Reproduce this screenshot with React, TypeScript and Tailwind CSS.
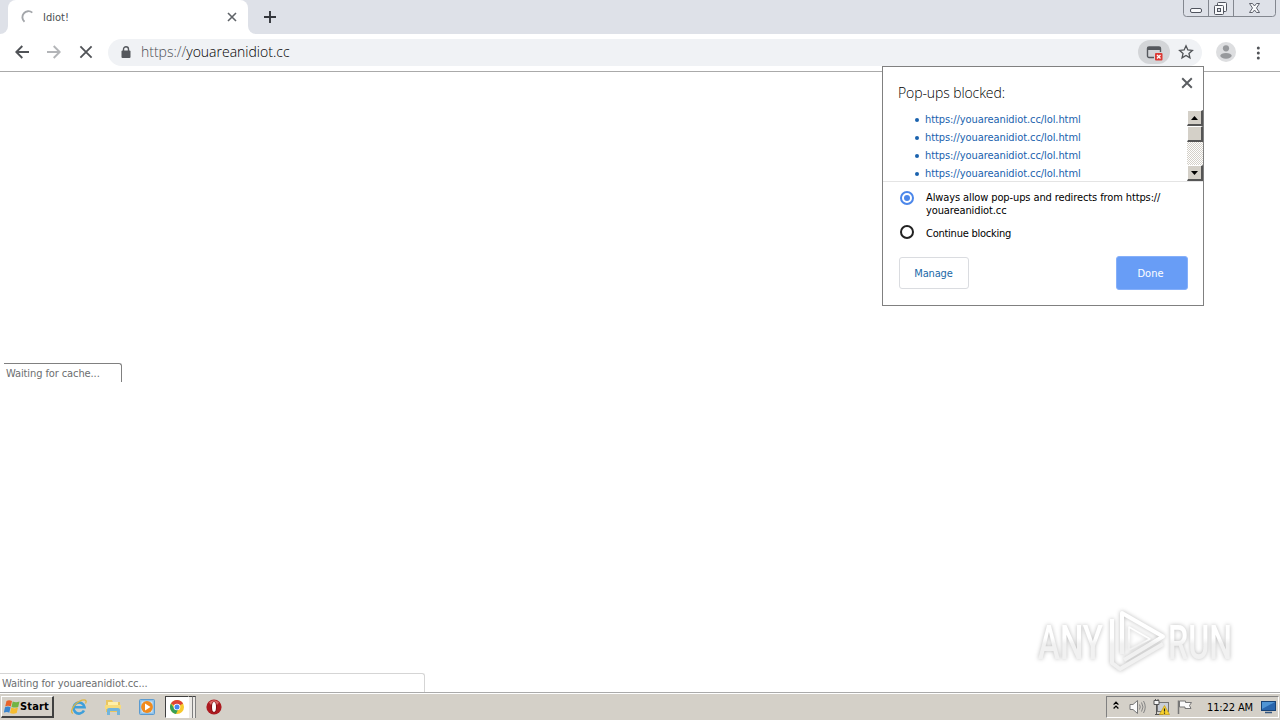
import React from 'react';

const blockedUrls = [
  'https://youareanidiot.cc/lol.html',
  'https://youareanidiot.cc/lol.html',
  'https://youareanidiot.cc/lol.html',
  'https://youareanidiot.cc/lol.html',
];

function Cross({ size, stroke, className }: { size: number; stroke: number; className: string }) {
  return (
    <svg width={size} height={size} viewBox="0 0 10 10" className={className}>
      <path d="M1 1L9 9M9 1L1 9" stroke="currentColor" strokeWidth={stroke} />
    </svg>
  );
}

function WindowButtons() {
  return (
    <svg width="94" height="18" viewBox="0 0 94 18" className="shrink-0">
      <path d="M.5 0V13.500a3 3 0 0 0 3 3H89.500a3 3 0 0 0 3-3V0M25.500 0V16.500M50.500 0V16.500" fill="none" stroke="#83878f" />
      <rect x="7.500" y="8.500" width="11" height="4" rx="1.500" fill="#f8f9fb" stroke="#50545e" />
      <rect x="34.500" y="2.500" width="9" height="9" rx="1" fill="#f8f9fb" stroke="#50545e" />
      <rect x="31.500" y="5.500" width="9" height="9" rx="1" fill="#f8f9fb" stroke="#50545e" />
      <rect x="34.500" y="8.500" width="3" height="3" fill="#dee1e8" stroke="#50545e" />
      <path d="M66.500 3.500h3l2 2.500 2-2.500h3L73.500 8l3 4.500h-3l-2-2.500-2 2.500h-3l3-4.500z" fill="#f8f9fb" stroke="#50545e" strokeWidth=".9" />
    </svg>
  );
}

function TabStrip() {
  return (
    <div className="flex h-[34px] shrink-0 bg-[#dee1e8]">
      <div className="flex w-2 items-end bg-white">
        <div className="h-full w-2 rounded-br-lg bg-[#dee1e8]" />
      </div>
      <div className="bg-[#dee1e8]">
        <div className="flex h-[34px] w-[240px] items-center rounded-t-lg bg-white pl-3 pr-[11px]">
          <svg width="16" height="16" viewBox="0 0 16 16">
            <path d="M4.500 12.800A5.800 5.800 0 0 1 12.300 3.600" fill="none" stroke="#a3a6aa" strokeWidth="1.900" />
          </svg>
          <span className="ml-[7px] mt-px text-[11px] leading-4 text-[#4b4e52]">Idiot!</span>
          <Cross size={10} stroke={1.6} className="ml-auto text-[#5f6368]" />
        </div>
      </div>
      <div className="w-2 bg-white">
        <div className="h-full w-2 rounded-bl-lg bg-[#dee1e8]" />
      </div>
      <svg width="12" height="12" viewBox="0 0 12 12" className="ml-2 mt-[11px]">
        <path d="M6 0V12M0 6H12" stroke="#33363c" strokeWidth="1.900" />
      </svg>
      <div className="ml-auto pr-[3px]">
        <WindowButtons />
      </div>
    </div>
  );
}

function Toolbar() {
  return (
    <div className="flex h-[38px] shrink-0 items-center border-b border-[#aaaaaa] bg-white pb-px pl-[15px]">
      <svg width="14" height="14" viewBox="0 0 14 14" className="text-[#505357]">
        <path d="M14 7H1.500M7.300 1L1.300 7L7.300 13" fill="none" stroke="currentColor" strokeWidth="1.900" />
      </svg>
      <svg width="14" height="14" viewBox="0 0 14 14" className="ml-[18px] text-[#b3b5b8]">
        <path d="M0 7H12.500M6.700 1L12.700 7L6.700 13" fill="none" stroke="currentColor" strokeWidth="1.900" />
      </svg>
      <Cross size={14} stroke={1.3} className="ml-[18px] text-[#505357]" />
      <div className="ml-[15px] flex h-[27px] w-[1094px] items-center rounded-full bg-[#f0f2f5] pl-[13px] pr-[8px]">
        <svg width="10" height="13" viewBox="0 0 10 13">
          <rect x=".5" y="4.500" width="9" height="7.500" rx="1" fill="#55585d" />
          <path d="M2.500 5V3.200a2.500 2.500 0 0 1 5 0V5" fill="none" stroke="#55585d" strokeWidth="1.400" />
        </svg>
        <span className="ml-[10px] whitespace-nowrap font-['Open_Sans','Noto_Sans',sans-serif] text-[14px] font-light leading-5 text-black">
          <span className="tracking-[-0.02px] text-[#4b4e53]">https://</span>youareanidiot.cc
        </span>
        <div className="ml-auto flex h-6 w-8 items-center justify-center rounded-full bg-[#d3d5d8]">
          <svg width="18" height="16" viewBox="0 0 18 16" className="ml-px mt-px">
            <path d="M8 12.500H3a1.500 1.500 0 0 1-1.500-1.500V3.500A1.500 1.500 0 0 1 3 2H13a1.500 1.500 0 0 1 1.500 1.500V7" fill="none" stroke="#55585d" strokeWidth="1.400" />
            <path d="M1.500 2h13v3h-13z" fill="#55585d" />
            <rect x="9" y="8" width="7.500" height="7.500" rx="1" fill="#dc3a35" />
            <path d="M11 10l3.500 3.500M14.500 10L11 13.500" stroke="#fff" strokeWidth="1.300" />
          </svg>
        </div>
        <svg width="16" height="16" viewBox="0 0 16 16" className="ml-2">
          <path d="M8 1.800l1.850 4.150 4.500.45-3.400 3 1 4.450L8 11.500l-3.950 2.350 1-4.450-3.400-3 4.500-.45z" fill="none" stroke="#505357" strokeWidth="1.300" />
        </svg>
      </div>
      <svg width="20" height="20" viewBox="0 0 20 20" className="ml-[14px]">
        <circle cx="10" cy="10" r="10" fill="#dddee0" />
        <circle cx="10" cy="6.300" r="3.100" fill="#97999c" />
        <ellipse cx="10" cy="13.800" rx="5.700" ry="2.900" fill="#97999c" />
      </svg>
      <svg width="4" height="14" viewBox="0 0 4 14" className="ml-5 mt-px text-[#505357]">
        <circle cx="2.300" cy="2" r="1.500" fill="currentColor" />
        <circle cx="2.300" cy="7" r="1.500" fill="currentColor" />
        <circle cx="2.300" cy="12" r="1.500" fill="currentColor" />
      </svg>
    </div>
  );
}

function ScrollButton({ up }: { up?: boolean }) {
  return (
    <div className="flex h-4 w-4 items-center justify-center border border-b-2 border-r-2 border-b-[#555] border-l-white border-r-[#555] border-t-white bg-[#d4d0c8]">
      <svg width="7" height="4" viewBox="0 0 7 4">
        <path d={up ? 'M0 4L3.500 0L7 4z' : 'M0 0H7L3.500 4z'} fill="#000" />
      </svg>
    </div>
  );
}

function PopupBubble() {
  return (
    <div className="absolute left-[882px] top-[66px] flex h-[240px] w-[322px] flex-col border border-[#808080] bg-white text-[11px] text-black">
      <div className="flex h-[43px] shrink-0 justify-between pl-[15px] pr-[10px]">
        <h2 className="mt-[16px] whitespace-nowrap font-['Open_Sans','Noto_Sans',sans-serif] text-[14px] font-light leading-5 tracking-[-0.1px]">Pop-ups blocked:</h2>
        <Cross size={12} stroke={1.6} className="mt-[10px] text-[#5a5d61]" />
      </div>
      <div className="flex h-[72px] shrink-0 justify-between border-b border-[#e4e4e4]">
        <ul className="pl-[32px] pt-px">
          {blockedUrls.map((url, i) => (
            <li key={i} className="flex h-[18px] items-center text-[#1a62ae]">
              <span className="h-1 w-1 rounded-full bg-[#1a62ae]" />
              <span className="ml-[6px] whitespace-nowrap leading-[18px] tracking-[-0.08px]">{url}</span>
            </li>
          ))}
        </ul>
        <div className="flex w-4 flex-col bg-[#e9e7e3]">
          <ScrollButton up />
          <div className="h-4 w-4 border border-b-2 border-r-2 border-b-[#555] border-l-white border-r-[#555] border-t-white bg-[#d4d0c8]" />
          <div className="flex-1 bg-[repeating-conic-gradient(#d4d0c8_0_25%,#ffffff_0_50%)] bg-[length:2px_2px]" />
          <ScrollButton />
        </div>
      </div>
      <div className="flex pl-[17px] pt-[9px]">
        <div className="flex h-[14px] w-[14px] items-center justify-center rounded-full border-2 border-[#4c87ea]">
          <div className="h-[6px] w-[6px] rounded-full bg-[#4c87ea]" />
        </div>
        <p className="ml-3 whitespace-nowrap leading-[13px] tracking-[-0.11px]">
          Always allow pop-ups and redirects from https://
          <br />
          youareanidiot.cc
        </p>
      </div>
      <div className="mt-[8px] flex pl-[17px]">
        <div className="h-[14px] w-[14px] rounded-full border-2 border-[#222]" />
        <p className="ml-3 mt-[2px] whitespace-nowrap leading-[13px] tracking-[-0.25px]">Continue blocking</p>
      </div>
      <div className="mt-[16px] flex justify-between pl-[16px] pr-[15px]">
        <button className="mt-px h-[32px] w-[70px] rounded-[3px] border border-[#dadce0] pr-px pt-[2px] tracking-[-0.15px] text-[#1a69a8]">Manage</button>
        <button className="h-[34px] w-[72px] rounded-[3px] border border-[#86b0fa] bg-[#689df6] pr-[3px] pt-[2px] text-white">Done</button>
      </div>
    </div>
  );
}

function Watermark() {
  return (
    <svg width="250" height="76" viewBox="0 0 250 76" className="absolute left-[1030px] top-[602px] drop-shadow-[0_0_2px_#bbbbbb]">
      <defs>
        <linearGradient id="fade" gradientUnits="userSpaceOnUse" x1="0" y1="36" x2="0" y2="42">
          <stop offset="0" stopColor="#ffffff" />
          <stop offset="1" stopColor="#f1f1f1" />
        </linearGradient>
      </defs>
      <g fill="url(#fade)" fontFamily="Roboto, sans-serif" fontSize="48" fontWeight="500">
        <text x="8" y="57" textLength="65" lengthAdjust="spacingAndGlyphs">ANY</text>
        <text x="138" y="57" textLength="64" lengthAdjust="spacingAndGlyphs">RUN</text>
      </g>
      <g fill="none" stroke="url(#fade)" strokeWidth="4" strokeLinejoin="round">
        <path d="M92 52V11L133 34.500L94 58" />
        <path d="M82 17V61L90 67L133 42" />
        <path d="M99 48V25L120 37z" strokeWidth="1.500" />
      </g>
    </svg>
  );
}

function StartButton() {
  return (
    <div className="flex h-[22px] w-[53px] items-center border border-b-2 border-r-2 border-b-[#404040] border-l-white border-r-[#404040] border-t-white pl-[2px]">
      <svg width="16" height="16" viewBox="0 0 16 16">
        <path d="M2.500 2Q5 .3 8 2L6.800 7.400Q4 5.900 1.200 7.400z" fill="#e8632a" />
        <path d="M8.700 2.400Q12 4 15.500 2.400L14.200 7.900Q11 9.100 7.500 7.900z" fill="#72b443" />
        <path d="M1 8.200Q4 6.700 6.600 8.200L5.300 13.700Q3 12.200-.2 13.700z" fill="#3985cf" />
        <path d="M7.300 8.600Q10.500 10.200 14 8.600L12.700 14Q9 15.500 6 14z" fill="#f5bc2f" />
      </svg>
      <span className="mt-px text-[11px] font-bold leading-4 tracking-[0.15px] text-black">Start</span>
    </div>
  );
}

function Taskbar() {
  return (
    <div className="flex h-[27px] shrink-0 items-center border-t border-white bg-[#d4d0c8] pl-px">
      <StartButton />
      {/* Internet Explorer */}
      <svg width="18" height="18" viewBox="0 0 18 18" className="ml-[16px]">
        <path d="M14 12.500A5.500 5.500 0 1 1 14.500 9.300H5" fill="none" stroke="#3e9fda" strokeWidth="2.600" />
        <path d="M3 15.500C-1 14 4 5 12 2.200C16 1 17 3 15.500 5.500" fill="none" stroke="#dfb640" strokeWidth="1.300" />
      </svg>
      {/* Explorer */}
      <svg width="18" height="18" viewBox="0 0 18 18" className="ml-[16px]">
        <path d="M2 2h6l1 2h7v10H2z" fill="#eac660" />
        <path d="M4 4h10v7H4z" fill="#fff0a8" />
        <path d="M1 7h16v4H1z" fill="#f7dc7c" />
        <path d="M3 17v-5q0-2 2-2h9q2 0 2 2v5h-3v-4H6v4z" fill="#72b5dc" />
      </svg>
      {/* Media player */}
      <svg width="16" height="16" viewBox="0 0 16 16" className="ml-[17px]">
        <rect x=".5" y=".5" width="15" height="15" rx="1" fill="#8fc1e8" stroke="#5b9bd0" />
        <rect x="2.500" y="2.500" width="11" height="11" fill="#d5e9f8" />
        <circle cx="8" cy="8" r="5.900" fill="#f08a1d" />
        <path d="M6 4.500L11.500 8L6 11.500z" fill="#fff" />
      </svg>
      <div className="ml-[10px] flex h-[22px] w-[24px] items-center justify-center border border-b-white border-l-[#404040] border-r-white border-t-[#404040] bg-white">
        <svg width="16" height="16" viewBox="0 0 16 16">
          <circle cx="8" cy="8" r="7" fill="#f7c92c" />
          <path d="M8 8L1.940 4.500A7 7 0 0 1 14.060 4.500z" fill="#dd4336" />
          <path d="M1.940 4.500A7 7 0 0 0 7 14.950L9.500 9.500L5 9z" fill="#37a055" />
          <circle cx="8" cy="8" r="3.300" fill="#fff" />
          <circle cx="8" cy="8" r="2.500" fill="#4586ee" />
        </svg>
      </div>
      <div className="h-[22px] w-[4px] border-r border-t border-r-[#808080] border-t-[#404040] bg-[#eceae6]" />
      <div className="h-[22px] w-[3px] border-r border-t border-r-[#808080] border-t-[#404040] bg-[#eceae6]" />
      {/* Opera */}
      <svg width="16" height="16" viewBox="0 0 16 16" className="ml-[10px]">
        <circle cx="8" cy="8" r="7.600" fill="#ac1a20" />
        <path d="M3 3.500Q8-1 13 3.500L11 6H5z" fill="#d96866" />
        <ellipse cx="8" cy="8" rx="3" ry="5.600" fill="#7c1014" />
        <ellipse cx="8" cy="8" rx="2" ry="4.900" fill="#fff" />
      </svg>
      <div className="ml-auto flex h-[22px] w-[173px] items-center border border-b-white border-l-[#808080] border-r-white border-t-[#808080] pl-[6px]">
        <svg width="6" height="9" viewBox="0 0 7 10" className="mb-[3px]">
          <path d="M.7 4L3.500 1.200L6.300 4M.7 8.500L3.500 5.700L6.300 8.500" fill="none" stroke="#000" strokeWidth="1.500" />
        </svg>
        <svg width="17" height="16" viewBox="0 0 17 16" className="ml-[10px]">
          <path d="M1 5.500h3L8.500 1.500v13L4 10.500H1z" fill="#fafafa" stroke="#777" />
          <path d="M10.500 5.500q1.500 2.500 0 5M12.500 3.500q3 4.500 0 9M14.500 2q3.500 6 0 12" fill="none" stroke="#858585" />
        </svg>
        <svg width="17" height="17" viewBox="0 0 17 17" className="ml-[7px]">
          <rect x="4.500" y="3.500" width="11" height="9" fill="#c9ced6" stroke="#747474" />
          <path d="M1 1.500h5v4H1zM3.500 5.500v10M2 15.500h8M2.500 0v2M5 0v2" fill="#f5f5f5" stroke="#555" />
          <path d="M11.500 6.500L16.500 15.500H6.500z" fill="#f8d22c" stroke="#c49b14" strokeWidth=".7" />
          <path d="M11.500 9.500v3M11.500 13.500v1.200" stroke="#222" strokeWidth="1.200" />
        </svg>
        <svg width="16" height="16" viewBox="0 0 16 16" className="ml-[7px]">
          <path d="M1.500 15V1.500" stroke="#777" strokeWidth="1.500" />
          <path d="M2.500 2h6v1.500h6L12.500 6.500L14 9.500H8V8H2.500z" fill="#fafafa" stroke="#777" />
        </svg>
        <span className="ml-[14px] mt-px whitespace-nowrap text-[11px] leading-4 tracking-[-0.12px] text-black">11:22 AM</span>
        <svg width="15" height="14" viewBox="0 0 15 14" className="ml-[8px] shrink-0">
          <rect x=".5" y="1.500" width="14" height="9" fill="#2865ad" stroke="#174276" />
          <path d="M1 2h13L1 9z" fill="#4f94d4" />
          <path d="M4 12.500h7" stroke="#34567f" strokeWidth="1.500" />
        </svg>
      </div>
      <div className="w-px" />
    </div>
  );
}

export default function App() {
  return (
    <div className="relative flex h-[720px] w-[1280px] flex-col overflow-hidden bg-white font-['DejaVu_Sans_Condensed','DejaVu_Sans',sans-serif]">
      <TabStrip />
      <Toolbar />
      <main className="flex flex-1 flex-col justify-between border-b border-[#aaaaaa] text-[11px] tracking-[-0.1px] text-[#6c6e70]">
        <div className="ml-1 mt-[291px] h-[19px] w-[118px] whitespace-nowrap rounded-tr-[3px] border-r border-t border-[#808080] pl-[2px] leading-5">
          Waiting for cache...
        </div>
        <div className="h-[19px] w-[425px] rounded-tr-[3px] border-r border-t border-[#d5d5d5] pl-[2px] leading-5">
          Waiting for youareanidiot.cc...
        </div>
      </main>
      <Taskbar />
      <PopupBubble />
      <Watermark />
    </div>
  );
}
